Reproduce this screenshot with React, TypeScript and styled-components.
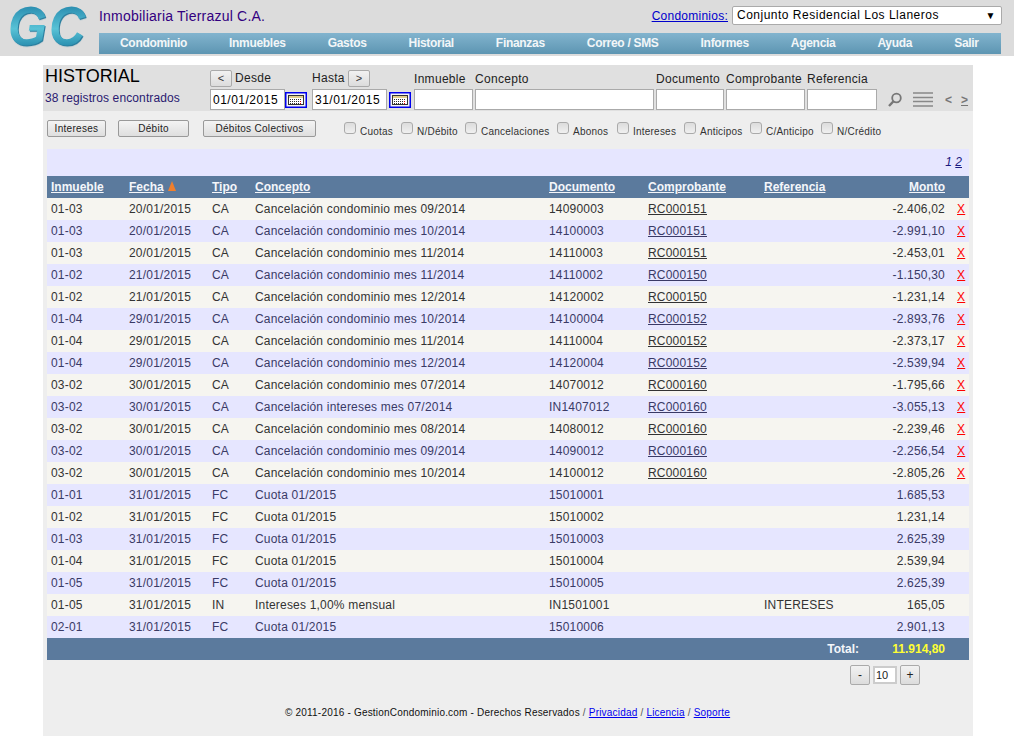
import React from 'react'
import styled, { createGlobalStyle } from 'styled-components'

type Row = [string, string, string, string, string, string, string, string]

const ROWS: Row[] = [
  ['01-03', '20/01/2015', 'CA', 'Cancelación condominio mes 09/2014', '14090003', 'RC000151', '', '-2.406,02'],
  ['01-03', '20/01/2015', 'CA', 'Cancelación condominio mes 10/2014', '14100003', 'RC000151', '', '-2.991,10'],
  ['01-03', '20/01/2015', 'CA', 'Cancelación condominio mes 11/2014', '14110003', 'RC000151', '', '-2.453,01'],
  ['01-02', '21/01/2015', 'CA', 'Cancelación condominio mes 11/2014', '14110002', 'RC000150', '', '-1.150,30'],
  ['01-02', '21/01/2015', 'CA', 'Cancelación condominio mes 12/2014', '14120002', 'RC000150', '', '-1.231,14'],
  ['01-04', '29/01/2015', 'CA', 'Cancelación condominio mes 10/2014', '14100004', 'RC000152', '', '-2.893,76'],
  ['01-04', '29/01/2015', 'CA', 'Cancelación condominio mes 11/2014', '14110004', 'RC000152', '', '-2.373,17'],
  ['01-04', '29/01/2015', 'CA', 'Cancelación condominio mes 12/2014', '14120004', 'RC000152', '', '-2.539,94'],
  ['03-02', '30/01/2015', 'CA', 'Cancelación condominio mes 07/2014', '14070012', 'RC000160', '', '-1.795,66'],
  ['03-02', '30/01/2015', 'CA', 'Cancelación intereses mes 07/2014', 'IN1407012', 'RC000160', '', '-3.055,13'],
  ['03-02', '30/01/2015', 'CA', 'Cancelación condominio mes 08/2014', '14080012', 'RC000160', '', '-2.239,46'],
  ['03-02', '30/01/2015', 'CA', 'Cancelación condominio mes 09/2014', '14090012', 'RC000160', '', '-2.256,54'],
  ['03-02', '30/01/2015', 'CA', 'Cancelación condominio mes 10/2014', '14100012', 'RC000160', '', '-2.805,26'],
  ['01-01', '31/01/2015', 'FC', 'Cuota 01/2015', '15010001', '', '', '1.685,53'],
  ['01-02', '31/01/2015', 'FC', 'Cuota 01/2015', '15010002', '', '', '1.231,14'],
  ['01-03', '31/01/2015', 'FC', 'Cuota 01/2015', '15010003', '', '', '2.625,39'],
  ['01-04', '31/01/2015', 'FC', 'Cuota 01/2015', '15010004', '', '', '2.539,94'],
  ['01-05', '31/01/2015', 'FC', 'Cuota 01/2015', '15010005', '', '', '2.625,39'],
  ['01-05', '31/01/2015', 'IN', 'Intereses 1,00% mensual', 'IN1501001', '', 'INTERESES', '165,05'],
  ['02-01', '31/01/2015', 'FC', 'Cuota 01/2015', '15010006', '', '', '2.901,13'],
]

const NAV = ['Condominio', 'Inmuebles', 'Gastos', 'Historial', 'Finanzas', 'Correo / SMS', 'Informes', 'Agencia', 'Ayuda', 'Salir']
const CHECKS: [string, number][] = [
  ['Cuotas', 57], ['N/Débito', 64], ['Cancelaciones', 92], ['Abonos', 60],
  ['Intereses', 67], ['Anticipos', 66], ['C/Anticipo', 71], ['N/Crédito', 70],
]
const COLUMNS = [78, 83, 43, 294, 99, 116, 100, 89, 20]

function CalendarIcon() {
  return (
    <svg width="22" height="16" viewBox="0 0 22 16">
      <rect x="0.75" y="0.75" width="20.5" height="14.5" fill="#f4f4f4" stroke="#0000ee" strokeWidth="1.5" />
      <rect x="3.5" y="3.5" width="15" height="9" fill="#fff" stroke="#333" />
      <rect x="4" y="4" width="14" height="2" fill="#e2cf8c" />
      {[7, 9, 11].map((y) => (
        <path key={y} d={`M5 ${y + 0.5}H17`} stroke="#333" strokeDasharray="1 1" />
      ))}
      <path d="M15 9.5H17M15 11.5H17" stroke="#e00000" strokeDasharray="1 1" />
    </svg>
  )
}

export default function App() {
  return (
    <>
      <GlobalStyle />
      <Header>
        <LogoBox>
          <Logo>GC</Logo>
        </LogoBox>
        <HeaderMain>
          <HeaderTop>
            <Company>Inmobiliaria Tierrazul C.A.</Company>
            <CondoLink href="#">Condominios:</CondoLink>
            <CondoSelect>
              Conjunto Residencial Los Llaneros
              <Caret>▼</Caret>
            </CondoSelect>
          </HeaderTop>
          <Nav>
            {NAV.map((item) => <NavItem key={item}>{item}</NavItem>)}
          </Nav>
        </HeaderMain>
      </Header>

      <Page>
        <Filters>
          <TitleBlock>
            <Title>HISTORIAL</Title>
            <Count>38 registros encontrados</Count>
          </TitleBlock>
          <DateField>
            <DateLabel>
              <SmallButton>&lt;</SmallButton>
              <span>Desde</span>
            </DateLabel>
            <DateInputs $gap={0}>
              <FilterInput $width={75} defaultValue="01/01/2015" />
              <CalendarIcon />
            </DateInputs>
          </DateField>
          <DateField>
            <DateLabel>
              <span>Hasta</span>
              <SmallButton>&gt;</SmallButton>
            </DateLabel>
            <DateInputs $gap={2}>
              <FilterInput $width={75} defaultValue="31/01/2015" />
              <CalendarIcon />
            </DateInputs>
          </DateField>
          <Field>
            <FieldLabel>Inmueble</FieldLabel>
            <FilterInput $width={59} />
          </Field>
          <Field>
            <FieldLabel>Concepto</FieldLabel>
            <FilterInput $width={179} />
          </Field>
          <Field>
            <FieldLabel>Documento</FieldLabel>
            <FilterInput $width={68} />
          </Field>
          <Field>
            <FieldLabel>Comprobante</FieldLabel>
            <FilterInput $width={79} />
          </Field>
          <Field>
            <FieldLabel>Referencia</FieldLabel>
            <FilterInput $width={70} />
          </Field>
          <Tools>
            <svg width="16" height="16" viewBox="0 0 16 16">
              <circle cx="9.5" cy="6" r="4.3" fill="none" stroke="#777" strokeWidth="1.8" />
              <path d="M6.5 9.2L2 14" stroke="#777" strokeWidth="2.4" />
            </svg>
            <svg width="20" height="15" viewBox="0 0 20 15">
              <path d="M0 1H20M0 5.5H20M0 9.5H20M0 14H20" stroke="#888" strokeWidth="1.4" />
            </svg>
            <Arrow>&lt;</Arrow>
            <Arrow $underline>&gt;</Arrow>
          </Tools>
        </Filters>

        <Actions>
          <ActionButton $width={59}>Intereses</ActionButton>
          <ActionButton $width={71}>Débito</ActionButton>
          <ActionButton $width={113}>Débitos Colectivos</ActionButton>
          <Checks>
            {CHECKS.map(([label, width]) => (
              <CheckItem key={label} style={{ width }}>
                <CheckBox type="checkbox" />
                <span>{label}</span>
              </CheckItem>
            ))}
          </Checks>
        </Actions>

        <Pager>
          <em>1</em> <a href="#">2</a>
        </Pager>

        <Table>
          <colgroup>
            {COLUMNS.map((w, i) => <col key={i} style={{ width: w }} />)}
          </colgroup>
          <thead>
            <tr>
              <HeadCell><a href="#">Inmueble</a></HeadCell>
              <HeadCell><a href="#">Fecha</a> <SortMark /></HeadCell>
              <HeadCell><a href="#">Tipo</a></HeadCell>
              <HeadCell><a href="#">Concepto</a></HeadCell>
              <HeadCell><a href="#">Documento</a></HeadCell>
              <HeadCell><a href="#">Comprobante</a></HeadCell>
              <HeadCell><a href="#">Referencia</a></HeadCell>
              <HeadCell $right><a href="#">Monto</a></HeadCell>
              <HeadCell />
            </tr>
          </thead>
          <tbody>
            {ROWS.map((row, i) => (
              <DataRow key={i} $alt={i % 2 === 1}>
                <Cell>{row[0]}</Cell>
                <Cell>{row[1]}</Cell>
                <Cell>{row[2]}</Cell>
                <Cell>{row[3]}</Cell>
                <Cell>{row[4]}</Cell>
                <Cell>{row[5] && <ReceiptLink href="#">{row[5]}</ReceiptLink>}</Cell>
                <Cell>{row[6]}</Cell>
                <Cell $right>{row[7]}</Cell>
                <DeleteCell>{row[5] && <a href="#">X</a>}</DeleteCell>
              </DataRow>
            ))}
          </tbody>
          <tfoot>
            <tr>
              <TotalLabel colSpan={7}>Total:</TotalLabel>
              <TotalValue>11.914,80</TotalValue>
              <TotalEnd />
            </tr>
          </tfoot>
        </Table>

        <Stepper>
          <StepButton>-</StepButton>
          <StepInput defaultValue="10" />
          <StepButton>+</StepButton>
        </Stepper>

        <Footer>
          © 2011-2016 - GestionCondominio.com - Derechos Reservados <span>/</span> <a href="#">Privacidad</a> <span>/</span> <a href="#">Licencia</a> <span>/</span> <a href="#">Soporte</a>
        </Footer>
      </Page>
    </>
  )
}

// styled components
const GlobalStyle = createGlobalStyle`
  html, body {
    margin: 0;
    padding: 0;
    background: #fff;
    font-family: "Liberation Sans", Arial, sans-serif;
    font-size: 12px;
  }
  * {box-sizing: border-box;}
`

const Header = styled.header`
  display: flex;
  height: 56px;
  background: #dcdcdc;
`

const LogoBox = styled.div`
  width: 99px;
  padding-left: 8px;
`

const Logo = styled.div`
  display: inline-block;
  padding-right: 5px;
  font-size: 50px;
  line-height: 50px;
  font-style: italic;
  font-weight: 700;
  letter-spacing: 2px;
  transform: translateY(-2px) scaleY(1.12);
  transform-origin: top left;
  background: linear-gradient(180deg, #2a8db0 14%, #58c2d6 55%, #2a8fb0 86%);
  background-clip: text;
  -webkit-background-clip: text;
  color: transparent;
  filter: drop-shadow(1px 1px 0 #2c7f9f);
`

const HeaderMain = styled.div`
  display: flex;
  flex-direction: column;
  width: 903px;
`

const HeaderTop = styled.div`
  display: flex;
  align-items: center;
  height: 33px;
  padding-bottom: 2px;
`

const Company = styled.div`
  flex: 1;
  font-size: 14px;
  letter-spacing: 0.22px;
  color: #330080;
`

const CondoLink = styled.a`
  margin-right: 4px;
  font-size: 12px;
  letter-spacing: 0.25px;
  color: #0000cc;
  text-decoration: underline;
`

const CondoSelect = styled.div`
  position: relative;
  width: 270px;
  height: 19px;
  padding-left: 4px;
  font-size: 12px;
  line-height: 17px;
  letter-spacing: 0.5px;
  color: #000;
  background: #fff;
  border: 1px solid #aaa;
  border-radius: 2px;
`

const Caret = styled.span`
  position: absolute;
  top: 0;
  right: 5px;
  font-size: 10px;
`

const Nav = styled.nav`
  display: flex;
  width: 902px;
  height: 21px;
  padding: 0 21px;
  background: linear-gradient(180deg, #82b4ce 0%, #5d95b2 100%);
`

const NavItem = styled.a`
  padding: 0 21px;
  font-size: 12px;
  font-weight: 700;
  line-height: 20px;
  letter-spacing: -0.3px;
  color: #f2f6f8;
  white-space: nowrap;
  &:first-child {padding-left: 0;}
`

const Page = styled.main`
  display: flex;
  flex-direction: column;
  width: 930px;
  height: 671px;
  margin: 9px 0 0 43px;
  background: #eee;
`

const Filters = styled.div`
  display: flex;
  align-items: flex-end;
  height: 46px;
  padding: 0 0 1px 2px;
  background: #e0e0e0;
`

const TitleBlock = styled.div`
  width: 165px;
  align-self: stretch;
  padding-top: 2px;
`

const Title = styled.h1`
  margin: 0;
  font-size: 18px;
  font-weight: 400;
  line-height: 19px;
  color: #000;
`

const Count = styled.div`
  margin-top: 5px;
  font-size: 12px;
  letter-spacing: 0.12px;
  color: #2a1a70;
`

const DateField = styled.div`
  display: flex;
  flex-direction: column;
  width: 102px;
`

const DateLabel = styled.div`
  display: flex;
  align-items: center;
  gap: 3px;
  height: 18px;
  margin-bottom: 2px;
  font-size: 12px;
  letter-spacing: 0.3px;
  color: #222;
`

const DateInputs = styled.div<{ $gap: number }>`
  display: flex;
  align-items: center;
  gap: ${({ $gap }) => $gap}px;
`

const SmallButton = styled.button`
  width: 22px;
  height: 17px;
  padding: 0;
  font-family: inherit;
  font-size: 11px;
  color: #333;
  background: linear-gradient(180deg, #f2f2f2, #dcdcdc);
  border: 1px solid #aaa;
  border-radius: 2px;
`

const Field = styled.div`
  display: flex;
  flex-direction: column;
  margin-right: 2px;
`

const FieldLabel = styled.div`
  margin-bottom: 3px;
  font-size: 12px;
  line-height: 14px;
  letter-spacing: 0.3px;
  color: #222;
`

const FilterInput = styled.input<{ $width: number }>`
  flex: none;
  width: ${({ $width }) => $width}px;
  height: 21px;
  padding: 0 2px;
  font-family: inherit;
  font-size: 12px;
  letter-spacing: 0.5px;
  color: #000;
  background: #fff;
  border: 1px solid #aaa;
  outline: none;
`

const Tools = styled.div`
  display: flex;
  align-items: center;
  gap: 10px;
  height: 21px;
  padding-left: 8px;
`

const Arrow = styled.span<{ $underline?: boolean }>`
  margin-left: 2px;
  font-size: 12px;
  font-weight: 700;
  color: #777;
  text-decoration: ${({ $underline }) => $underline ? 'underline' : 'none'};
  & + & {margin-left: -1px;}
`

const Actions = styled.div`
  display: flex;
  align-items: flex-start;
  gap: 12px;
  height: 38px;
  padding: 9px 0 0 4px;
  & > button:nth-child(3) {margin-left: 2px;}
`

const ActionButton = styled.button<{ $width: number }>`
  width: ${({ $width }) => $width}px;
  height: 17px;
  padding: 0;
  font-family: inherit;
  font-size: 10px;
  letter-spacing: 0.3px;
  color: #222;
  background: linear-gradient(180deg, #f4f4f4, #dedede);
  border: 1px solid #999;
  border-radius: 2px;
`

const Checks = styled.div`
  display: flex;
  margin-left: 16px;
`

const CheckItem = styled.label`
  display: flex;
  align-items: flex-start;
  gap: 4px;
  font-size: 10px;
  letter-spacing: 0.22px;
  line-height: 24px;
  color: #333;
  white-space: nowrap;
`

const CheckBox = styled.input`
  appearance: none;
  flex: none;
  width: 12px;
  height: 12px;
  margin: 2px 0 0;
  background: linear-gradient(180deg, #dcdcdc, #f0f0f0);
  border: 1px solid #aaa;
  border-radius: 3px;
`

const Pager = styled.div`
  width: 922px;
  height: 27px;
  margin-left: 4px;
  padding: 6px 7px 0 0;
  text-align: right;
  font-size: 12px;
  line-height: 14px;
  font-style: italic;
  color: #1a1a80;
  background: #e6e6ff;
  & a {color: #1a1a80;}
`

const Table = styled.table`
  width: 922px;
  margin-left: 4px;
  table-layout: fixed;
  border-collapse: collapse;
`

const HeadCell = styled.th<{ $right?: boolean }>`
  height: 22px;
  padding: 0 4px;
  font-size: 12px;
  font-weight: 700;
  text-align: ${({ $right }) => $right ? 'right' : 'left'};
  white-space: nowrap;
  background: #5b7a9d;
  & a {color: #f4f6fa;}
`

const SortMark = styled.span`
  display: inline-block;
  width: 0;
  height: 0;
  margin-left: 1px;
  border-left: 4.5px solid transparent;
  border-right: 4.5px solid transparent;
  border-bottom: 10px solid #f07f2c;
`

const DataRow = styled.tr<{ $alt: boolean }>`
  color: ${({ $alt }) => $alt ? '#3a3a66' : '#333'};
  background: ${({ $alt }) => $alt ? '#e6e6ff' : '#f6f5f0'};
`

const Cell = styled.td<{ $right?: boolean }>`
  height: 22px;
  padding: 0 4px;
  font-size: 12px;
  letter-spacing: 0.2px;
  text-align: ${({ $right }) => $right ? 'right' : 'left'};
  white-space: nowrap;
`

const ReceiptLink = styled.a`
  color: inherit;
  text-decoration: underline;
`

const DeleteCell = styled.td`
  padding: 0 0 0 8px;
  font-size: 12px;
  letter-spacing: 0.2px;
  & a {color: #f00;}
`

const TotalLabel = styled.td`
  height: 22px;
  padding-right: 1px;
  text-align: right;
  font-size: 12px;
  font-weight: 700;
  color: #f4f6fa;
  background: #5b7a9d;
`

const TotalValue = styled.td`
  padding-right: 4px;
  text-align: right;
  font-size: 12px;
  font-weight: 700;
  color: #ffff33;
  background: #5b7a9d;
`

const TotalEnd = styled.td`
  background: #5b7a9d;
`

const Stepper = styled.div`
  display: flex;
  align-items: center;
  gap: 3px;
  width: 877px;
  margin-top: 5px;
  justify-content: flex-end;
`

const StepButton = styled.button`
  width: 20px;
  height: 20px;
  padding: 0;
  font-family: inherit;
  font-size: 12px;
  color: #222;
  background: linear-gradient(180deg, #f2f2f2, #dcdcdc);
  border: 1px solid #aaa;
  border-radius: 2px;
`

const StepInput = styled.input`
  width: 24px;
  height: 18px;
  padding: 0 1px;
  font-family: inherit;
  font-size: 11px;
  color: #222;
  background: #fff;
  border: 2px solid #ccc;
  outline: none;
`

const Footer = styled.footer`
  margin-top: 21px;
  padding-left: 242px;
  font-size: 10px;
  line-height: 14px;
  letter-spacing: 0.2px;
  color: #111;
  white-space: nowrap;
  & a {color: #0000ee;}
  & span {color: #555;}
`
